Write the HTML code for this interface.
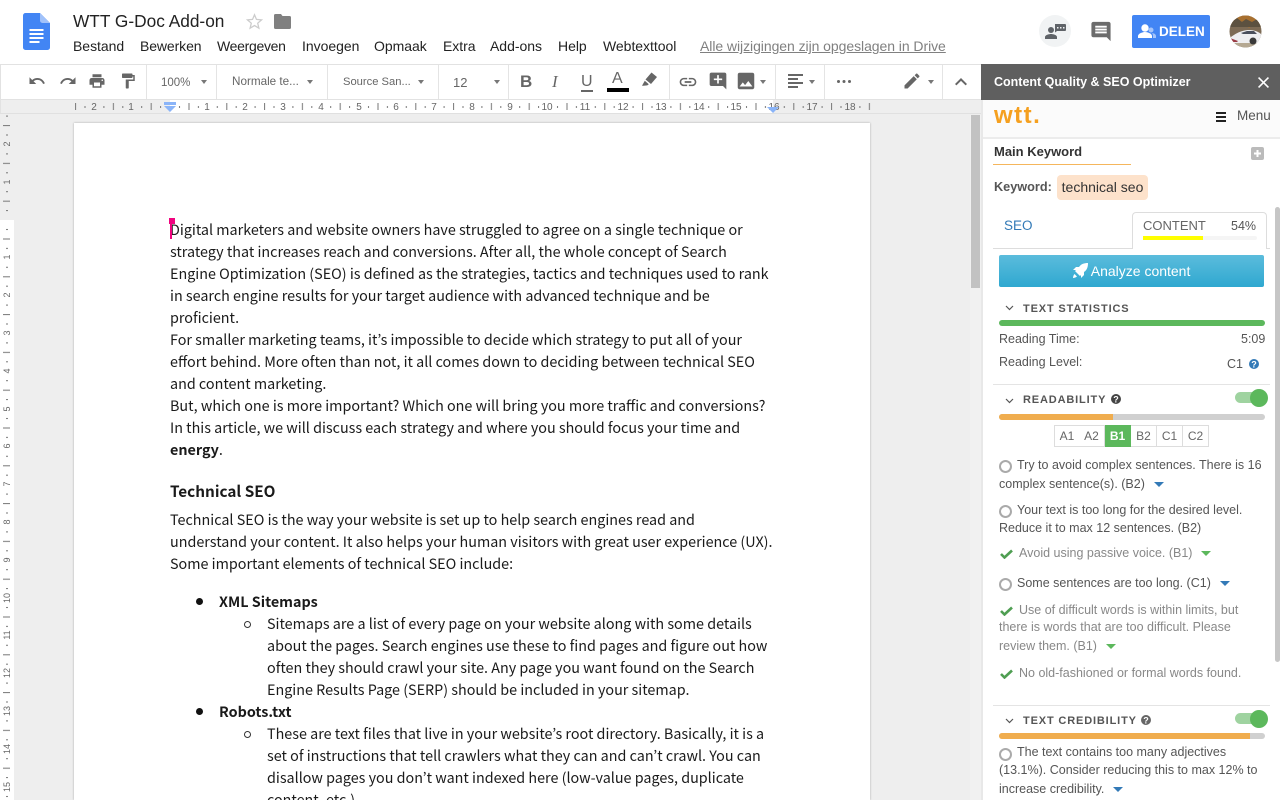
<!DOCTYPE html>
<html lang="nl"><head><meta charset="utf-8"><title>WTT G-Doc Add-on</title>
<style>
html,body{margin:0;padding:0;width:1280px;height:800px;overflow:hidden;background:#fff;font-family:"Liberation Sans",sans-serif}
#r{position:relative;width:1280px;height:800px;overflow:hidden}
.a{position:absolute;white-space:nowrap}
.m{top:37px;font-size:14px;line-height:18px;color:#222;letter-spacing:-.03px}
.d{left:170px;font-family:"Noto Sans CJK KR","Liberation Sans",sans-serif;font-size:14.35px;line-height:22px;color:#1a1a1a;white-space:nowrap;position:absolute}
.l{left:267px}
.t{color:#666;font-size:11.500px;line-height:16px}
.div{position:absolute;top:65px;width:1px;height:34px;background:#e4e4e4}
.car{position:absolute;width:0;height:0;border-left:3.5px solid transparent;border-right:3.5px solid transparent;border-top:4px solid #777}
.i{position:absolute;fill:#666}
.s{font-size:12.500px;line-height:18px;color:#555;position:absolute;white-space:nowrap}
.g{color:#888}
.h{font-size:11px;font-weight:bold;color:#555;letter-spacing:.85px;position:absolute;line-height:16px;white-space:nowrap}
.rad{position:absolute;width:9px;height:9px;border:2px solid #aaa;border-radius:50%;background:#fff}
.cb{position:absolute;width:0;height:0;border-left:5px solid transparent;border-right:5px solid transparent;border-top:5px solid #337ab7}
.cg{border-top-color:#5cb85c}
.lv{position:absolute;top:425px;height:20px;line-height:20px;width:25px;text-align:center;font-size:12px;color:#666;border:1px solid #ddd;border-left:0;background:#fff}
.hr{position:absolute;left:993px;width:277px;height:1px;background:#e4e4e4}
</style></head><body><div id="r">

<!-- Title bar -->
<svg class="a" style="left:23px;top:13px" width="27" height="37" viewBox="0 0 27 37"><path d="M2.5 0H17l10 10v24.500a2.500 2.500 0 0 1-2.500 2.500h-22A2.500 2.500 0 0 1 0 34.500v-32A2.500 2.500 0 0 1 2.500 0z" fill="#4285f4"/><path d="M17 0l10 10h-7.500A2.500 2.500 0 0 1 17 7.500z" fill="#a1c2fa"/><path d="M6.500 16h14v2h-14zM6.500 20h14v2h-14zM6.500 24h14v2h-14zM6.500 28h10v2h-10z" fill="#fff"/></svg>
<div class="a" style="left:73px;top:10px;font-size:17.300px;line-height:22px;color:#222">WTT G-Doc Add-on</div>
<svg class="a" style="left:246px;top:13px" width="17" height="17" viewBox="0 0 24 24"><path d="M12 2.500l2.800 6.600 7.200.6-5.500 4.700 1.700 7-6.200-3.700-6.200 3.700 1.700-7L2 9.700l7.200-.6z" fill="none" stroke="#ccc" stroke-width="1.800"/></svg>
<svg class="a" style="left:274px;top:14px" width="17" height="15" viewBox="0 0 17 15"><path d="M1.500 0H7l1.500 2h7A1.500 1.500 0 0 1 17 3.500v10A1.500 1.500 0 0 1 15.500 15h-14A1.500 1.500 0 0 1 0 13.500v-12A1.500 1.500 0 0 1 1.500 0z" fill="#808080"/></svg>

<div class="a m" style="left:73px">Bestand</div>
<div class="a m" style="left:140px;letter-spacing:-.1px">Bewerken</div>
<div class="a m" style="left:217px;letter-spacing:-.3px">Weergeven</div>
<div class="a m" style="left:302px">Invoegen</div>
<div class="a m" style="left:374px">Opmaak</div>
<div class="a m" style="left:443px">Extra</div>
<div class="a m" style="left:490px">Add-ons</div>
<div class="a m" style="left:558px">Help</div>
<div class="a m" style="left:603px">Webtexttool</div>
<div class="a m" style="left:700px;color:#808080;text-decoration:underline;letter-spacing:-.06px">Alle wijzigingen zijn opgeslagen in Drive</div>

<!-- Top right -->
<div class="a" style="left:1039px;top:15px;width:32px;height:32px;border-radius:50%;background:#f1f3f4"></div>
<svg class="a" style="left:1045px;top:24px" width="21" height="15" viewBox="0 0 21 15"><circle cx="6" cy="6" r="3" fill="#5f6368"/><path d="M0 15v-2c0-2 4-3 6-3s6 1 6 3v2z" fill="#5f6368"/><path d="M10 0h10a1 1 0 0 1 1 1v5a1 1 0 0 1-1 1h-8l-2 1.500z" fill="#5f6368"/><path d="M12 3h1.500v1.500H12zM15 3h1.500v1.500H15zM18 3h1.500v1.500H18z" fill="#f1f3f4"/></svg>
<svg class="a" style="left:1089px;top:20px;fill:#6b6b6b" width="24" height="23" viewBox="0 0 24 24"><path d="M21.990 4c0-1.100-.89-2-1.990-2H4c-1.100 0-2 .9-2 2v12c0 1.100.9 2 2 2h14l4 4-.01-18zM18 14H6v-2h12v2zm0-3H6V9h12v2zm0-3H6V6h12v2z"/></svg>
<div class="a" style="left:1132px;top:15px;width:78px;height:33px;background:#4285f4;border-radius:2px"></div>
<svg class="a" style="left:1138px;top:24px" width="18" height="15" viewBox="0 0 18 15"><circle cx="7" cy="4" r="3.700" fill="#fff"/><path d="M0 14v-2c0-2.500 4.500-4 7-4s7 1.500 7 4v2z" fill="#fff"/><circle cx="13" cy="6" r="2.500" fill="#a6c5fa"/><path d="M14 9c2 .3 4 1.200 4 3v2h-3v-2c0-1.200-.4-2.200-1-3z" fill="#a6c5fa"/></svg>
<div class="a" style="left:1159px;top:23px;color:#fff;font-weight:bold;font-size:13.500px;line-height:17px">DELEN</div>
<svg class="a" style="left:1229px;top:15px" width="33" height="33" viewBox="0 0 33 33"><defs><clipPath id="c"><circle cx="16.500" cy="16.500" r="16"/></clipPath></defs><g clip-path="url(#c)"><rect width="33" height="33" fill="#7d6b55"/><path d="M0 0h33v13L26 8l-6 5-6-7-7 6-7-2z" fill="#a8702f"/><path d="M8 3l5 4 4-3 6 3 5-3 5 5v3H0V8z" fill="#5c5140"/><rect y="27" width="33" height="6" fill="#b5a892"/><path d="M1 23c3-3 11-8 19-8 6 0 10 2 13 5v8H4z" fill="#eeeef0"/><path d="M12 18l6-2h7l3 3H14z" fill="#4a4f5c"/><path d="M1 23l8 3-1 1H1z" fill="#9a3a44"/><circle cx="24" cy="26" r="3.500" fill="#3a3a3a"/></g></svg>

<!-- Toolbar -->
<div class="a" style="left:0;top:64px;width:981px;height:1px;background:#e2e2e2"></div>
<div class="a" style="left:0;top:64px;width:1px;height:736px;background:#e2e2e2"></div>
<div class="div" style="left:146px"></div><div class="div" style="left:216px"></div><div class="div" style="left:327px"></div><div class="div" style="left:438px"></div><div class="div" style="left:508px"></div><div class="div" style="left:669px"></div><div class="div" style="left:775px"></div><div class="div" style="left:824px"></div><div class="div" style="left:942px"></div>

<svg class="i" style="left:28px;top:72px" width="18" height="18" viewBox="0 0 24 24"><path d="M12.500 8c-2.650 0-5.050.99-6.900 2.600L2 7v9h9l-3.620-3.620c1.390-1.160 3.160-1.880 5.120-1.880 3.540 0 6.550 2.310 7.600 5.500l2.370-.78C21.080 11.030 17.150 8 12.500 8z"/></svg>
<svg class="i" style="left:59px;top:72px" width="18" height="18" viewBox="0 0 24 24"><path d="M18.400 10.600C16.550 8.990 14.150 8 11.500 8c-4.650 0-8.580 3.030-9.960 7.220L3.900 16c1.050-3.190 4.050-5.500 7.600-5.500 1.950 0 3.730.72 5.120 1.880L13 16h9V7l-3.600 3.600z"/></svg>
<svg class="i" style="left:88px;top:72px" width="18" height="18" viewBox="0 0 24 24"><path d="M19 8H5c-1.660 0-3 1.340-3 3v6h4v4h12v-4h4v-6c0-1.660-1.340-3-3-3zm-3 11H8v-5h8v5zm3-7c-.55 0-1-.45-1-1s.45-1 1-1 1 .45 1 1-.45 1-1 1zm-1-9H6v4h12V3z"/></svg>
<svg class="i" style="left:119px;top:72px" width="18" height="18" viewBox="0 0 24 24"><path d="M18 4V3c0-.55-.45-1-1-1H5c-.55 0-1 .45-1 1v4c0 .55.45 1 1 1h12c.55 0 1-.45 1-1V6h1v4H9v11c0 .55.45 1 1 1h2c.55 0 1-.45 1-1v-9h8V4h-3z"/></svg>

<div class="a t" style="left:161px;top:75px;font-size:11.500px">100%</div><div class="car" style="left:201px;top:80px"></div>
<div class="a t" style="left:232px;top:74px;font-size:11.700px">Normale te...</div><div class="car" style="left:307px;top:80px"></div>
<div class="a t" style="left:343px;top:74px;font-size:11.200px">Source San...</div><div class="car" style="left:418px;top:80px"></div>
<div class="a t" style="left:453px;top:75px;font-size:13px">12</div><div class="car" style="left:494px;top:80px"></div>

<div class="a" style="left:520px;top:72px;font-size:17px;line-height:20px;font-weight:bold;color:#666">B</div>
<div class="a" style="left:552px;top:72px;font-size:17px;line-height:20px;font-style:italic;color:#666;font-family:'Liberation Serif',serif">I</div>
<div class="a" style="left:581px;top:72px;font-size:16px;line-height:20px;color:#666">U</div>
<div class="a" style="left:581px;top:90px;width:12px;height:1.500px;background:#666"></div>
<div class="a" style="left:612px;top:69px;font-size:16px;line-height:20px;color:#666">A</div>
<div class="a" style="left:607px;top:88px;width:22px;height:4px;background:#000"></div>
<svg class="i" style="left:642px;top:71px" width="17" height="17" viewBox="0 0 17 17"><path d="M9.500 1.500l5.500 4.500-6 7-5.500-4.500zM2.800 9.800l4 3.400-1.500 1.200-3.800.3H0z"/></svg>
<svg class="i" style="left:678px;top:72px" width="20" height="20" viewBox="0 0 24 24"><path d="M3.900 12c0-1.710 1.390-3.100 3.100-3.100h4V7H7c-2.760 0-5 2.240-5 5s2.240 5 5 5h4v-1.900H7c-1.710 0-3.100-1.390-3.100-3.100zM8 13h8v-2H8v2zm9-6h-4v1.900h4c1.710 0 3.100 1.390 3.100 3.100s-1.390 3.100-3.100 3.100h-4V17h4c2.760 0 5-2.240 5-5s-2.240-5-5-5z"/></svg>
<svg class="i" style="left:708px;top:71px" width="20" height="20" viewBox="0 0 24 24"><path d="M22 4c0-1.100-.9-2-2-2H4c-1.100 0-2 .9-2 2v12c0 1.100.9 2 2 2h14l4 4V4zm-5 7h-4v4h-2v-4H7V9h4V5h2v4h4v2z"/></svg>
<svg class="i" style="left:735px;top:70px" width="22" height="22" viewBox="0 0 24 24"><path d="M21 19V5c0-1.100-.9-2-2-2H5c-1.100 0-2 .9-2 2v14c0 1.100.9 2 2 2h14c1.100 0 2-.9 2-2zM8.500 13.500l2.500 3.010L14.500 12l4.500 6H5l3.500-4.500z"/></svg>
<div class="car" style="left:760px;top:80px"></div>
<svg class="a" style="left:788px;top:74px" width="15" height="15" viewBox="0 0 15 15"><path d="M0 0h15v2H0zM0 4h10v2H0zM0 8h15v2H0zM0 12h10v2H0z" fill="#666"/></svg>
<div class="car" style="left:809px;top:80px"></div>
<svg class="a" style="left:837px;top:80px" width="14" height="3"><circle cx="1.500" cy="1.500" r="1.500" fill="#666"/><circle cx="7" cy="1.500" r="1.500" fill="#666"/><circle cx="12.500" cy="1.500" r="1.500" fill="#666"/></svg>
<svg class="i" style="left:902px;top:71px" width="20" height="20" viewBox="0 0 24 24"><path d="M3 17.250V21h3.750L17.810 9.940l-3.750-3.750L3 17.250zM20.710 7.040c.39-.39.39-1.020 0-1.410l-2.340-2.340c-.39-.39-1.020-.39-1.410 0l-1.830 1.830 3.750 3.750 1.830-1.830z"/></svg>
<div class="car" style="left:928px;top:80px"></div>
<svg class="i" style="left:949px;top:70px" width="24" height="24" viewBox="0 0 24 24"><path d="M12 8l-6 6 1.410 1.410L12 10.830l4.590 4.58L18 14z"/></svg>

<!-- Canvas -->
<div class="a" style="left:1px;top:99px;width:980px;height:701px;background:#eee"></div>

<!-- H ruler -->
<div class="a" style="left:1px;top:99px;width:980px;height:1px;background:#e2e2e2"></div>
<div class="a" style="left:170px;top:100px;width:603px;height:14px;background:#fff"></div>
<div class="a" style="left:0;top:113px;width:981px;height:1px;background:#e0e0e0"></div>
<svg class="a" style="left:0;top:100px;font-family:'Liberation Sans',sans-serif" width="981" height="14">
<defs><pattern id="p" patternUnits="userSpaceOnUse" x="170" y="0" width="37.800" height="14"><rect x="18.500" y="3" width="1" height="7" fill="#777"/><rect x="9" y="6" width="1" height="2" fill="#777"/><rect x="27.900" y="6" width="1" height="2" fill="#777"/></pattern></defs>
<rect x="70" width="801" height="14" fill="url(#p)"/>
<g font-size="10" fill="#666" text-anchor="middle">
<text x="94" y="10">2</text><text x="131" y="10">1</text><text x="207" y="10">1</text><text x="245" y="10">2</text><text x="283" y="10">3</text><text x="321" y="10">4</text><text x="359" y="10">5</text><text x="396" y="10">6</text><text x="434" y="10">7</text><text x="472" y="10">8</text><text x="510" y="10">9</text><text x="547" y="10">10</text><text x="585" y="10">11</text><text x="623" y="10">12</text><text x="661" y="10">13</text><text x="699" y="10">14</text><text x="736" y="10">15</text><text x="774" y="10">16</text><text x="812" y="10">17</text><text x="850" y="10">18</text>
</g>
<path d="M164 2h12v3h-12zM164 6h12l-6 6z" fill="#8ab4f8"/><path d="M767 7h12l-6 6z" fill="#8ab4f8"/>
</svg>

<!-- V ruler -->
<div class="a" style="left:0;top:114px;width:14px;height:686px;background:#fff"></div>
<div class="a" style="left:0;top:114px;width:14px;height:106px;background:#eee"></div>
<svg class="a" style="left:0;top:114px;font-family:'Liberation Sans',sans-serif" width="14" height="686">
<defs><pattern id="q" patternUnits="userSpaceOnUse" x="0" y="106" width="14" height="37.800"><rect x="3" y="18.500" width="7" height="1" fill="#777"/><rect x="6" y="9" width="2" height="1" fill="#777"/><rect x="6" y="27.900" width="2" height="1" fill="#777"/></pattern></defs>
<rect width="14" height="686" fill="url(#q)"/>
<g font-size="9" fill="#666" text-anchor="middle">
<text transform="translate(10 30) rotate(-90)">2</text><text transform="translate(10 68) rotate(-90)">1</text>
<text transform="translate(10 143) rotate(-90)">1</text><text transform="translate(10 181) rotate(-90)">2</text><text transform="translate(10 219) rotate(-90)">3</text><text transform="translate(10 257) rotate(-90)">4</text><text transform="translate(10 295) rotate(-90)">5</text><text transform="translate(10 332) rotate(-90)">6</text><text transform="translate(10 370) rotate(-90)">7</text><text transform="translate(10 408) rotate(-90)">8</text><text transform="translate(10 446) rotate(-90)">9</text><text transform="translate(10 484) rotate(-90)">10</text><text transform="translate(10 521) rotate(-90)">11</text><text transform="translate(10 559) rotate(-90)">12</text><text transform="translate(10 597) rotate(-90)">13</text><text transform="translate(10 635) rotate(-90)">14</text><text transform="translate(10 673) rotate(-90)">15</text>
</g></svg>

<!-- Page -->
<div class="a" style="left:74px;top:123px;width:796px;height:677px;background:#fff;box-shadow:0 0 2px rgba(0,0,0,.3)"></div>
<div class="a" style="left:970px;top:115px;width:11px;height:685px;background:#f1f1f1"></div>
<div class="a" style="left:971px;top:115px;width:9px;height:173px;background:#c2c2c2"></div>

<!-- Document text -->
<div class="d" style="top:219px">Digital marketers and website owners have struggled to agree on a single technique or</div>
<div class="d" style="top:241px">strategy that increases reach and conversions. After all, the whole concept of Search</div>
<div class="d" style="top:263px">Engine Optimization (SEO) is defined as the strategies, tactics and techniques used to rank</div>
<div class="d" style="top:285px">in search engine results for your target audience with advanced technique and be</div>
<div class="d" style="top:307px">proficient.</div>
<div class="d" style="top:329px">For smaller marketing teams, it’s impossible to decide which strategy to put all of your</div>
<div class="d" style="top:351px">effort behind. More often than not, it all comes down to deciding between technical SEO</div>
<div class="d" style="top:373px">and content marketing.</div>
<div class="d" style="top:395px">But, which one is more important? Which one will bring you more traffic and conversions?</div>
<div class="d" style="top:417px">In this article, we will discuss each strategy and where you should focus your time and</div>
<div class="d" style="top:439px"><b>energy</b>.</div>
<div class="d" style="top:480px;font-weight:bold;font-size:15.300px">Technical SEO</div>
<div class="d" style="top:509px">Technical SEO is the way your website is set up to help search engines read and</div>
<div class="d" style="top:531px">understand your content. It also helps your human visitors with great user experience (UX).</div>
<div class="d" style="top:553px">Some important elements of technical SEO include:</div>
<div class="a" style="left:196px;top:598px;width:7px;height:7px;border-radius:50%;background:#111"></div>
<div class="d" style="top:591px;left:219px;font-weight:bold">XML Sitemaps</div>
<div class="a" style="left:244px;top:621px;width:5px;height:5px;border-radius:50%;border:1px solid #333"></div>
<div class="d l" style="top:613px">Sitemaps are a list of every page on your website along with some details</div>
<div class="d l" style="top:635px">about the pages. Search engines use these to find pages and figure out how</div>
<div class="d l" style="top:657px">often they should crawl your site. Any page you want found on the Search</div>
<div class="d l" style="top:679px">Engine Results Page (SERP) should be included in your sitemap.</div>
<div class="a" style="left:196px;top:708px;width:7px;height:7px;border-radius:50%;background:#111"></div>
<div class="d" style="top:701px;left:219px;font-weight:bold">Robots.txt</div>
<div class="a" style="left:244px;top:731px;width:5px;height:5px;border-radius:50%;border:1px solid #333"></div>
<div class="d l" style="top:723px">These are text files that live in your website’s root directory. Basically, it is a</div>
<div class="d l" style="top:745px">set of instructions that tell crawlers what they can and can’t crawl. You can</div>
<div class="d l" style="top:767px">disallow pages you don’t want indexed here (low-value pages, duplicate</div>
<div class="d l" style="top:789px">content, etc.)</div>
<div class="a" style="left:169px;top:218px;width:6px;height:6px;background:#f0047f"></div>
<div class="a" style="left:170px;top:218px;width:2px;height:21px;background:#f0047f"></div>

<!-- Sidebar -->
<div class="a" style="left:981px;top:64px;width:299px;height:736px;background:#fff"></div>
<div class="a" style="left:981px;top:100px;width:2px;height:700px;background:#e8e8e8"></div>
<div class="a" style="left:981px;top:64px;width:299px;height:36px;background:#5f5f5f"></div>
<div class="a" style="left:994px;top:74px;color:#fff;font-weight:bold;font-size:12.500px;line-height:16px">Content Quality &amp; SEO Optimizer</div>
<svg class="a" style="left:1258px;top:77px" width="11" height="11" viewBox="5 5 14 14"><path d="M19 6.410L17.590 5 12 10.590 6.410 5 5 6.410 10.590 12 5 17.590 6.410 19 12 13.410 17.590 19 19 17.590 13.410 12z" fill="#fff"/></svg>
<div class="a" style="left:983px;top:100px;width:297px;height:37px;background:#fbfbfb"></div>
<div class="a" style="left:983px;top:137px;width:297px;height:2px;background:#ececec"></div>
<div class="a" style="left:994px;top:101px;font-size:24px;font-weight:bold;color:#f5a01f;line-height:30px;letter-spacing:1.500px">wtt.</div>
<svg class="a" style="left:1216px;top:112px" width="10" height="10"><path d="M0 0h10v2H0zM0 4h10v2H0zM0 8h10v2H0z" fill="#222"/></svg>
<div class="a" style="left:1237px;top:108px;font-size:13.500px;line-height:16px;color:#555">Menu</div>

<div class="a" style="left:994px;top:144px;font-size:13px;line-height:16px;font-weight:bold;color:#333">Main Keyword</div>
<div class="a" style="left:993px;top:164px;width:138px;height:1px;background:#f5b65c"></div>
<svg class="a" style="left:1251px;top:147px" width="13" height="13"><rect width="13" height="13" rx="2" fill="#bbb"/><path d="M5.500 3h2v2.500H10v2H7.500V10h-2V7.500H3v-2h2.500z" fill="#fff"/></svg>
<div class="a" style="left:994px;top:179px;font-size:12.700px;line-height:16px;font-weight:bold;color:#555">Keyword:</div>
<div class="a" style="left:1057px;top:175px;width:91px;height:25px;line-height:24px;background:#fde2cb;border-radius:4px;text-align:center;font-size:14px;color:#333">technical seo</div>

<div class="a" style="left:993px;top:248px;width:277px;height:1px;background:#ddd"></div>
<div class="a" style="left:1004px;top:218px;font-size:13.500px;line-height:16px;color:#337ab7">SEO</div>
<div class="a" style="left:1132px;top:212px;width:135px;height:37px;background:#fff;border:1px solid #ddd;border-bottom:0;border-radius:4px 4px 0 0;box-sizing:border-box"></div>
<div class="a" style="left:1143px;top:218px;font-size:13px;line-height:16px;color:#666">CONTENT</div>
<div class="a" style="left:1231px;top:218px;font-size:12.500px;line-height:16px;color:#555">54%</div>
<div class="a" style="left:1143px;top:236px;width:114px;height:4px;background:#f5f5f5;border-radius:2px"></div>
<div class="a" style="left:1143px;top:236px;width:60px;height:4px;background:#ffff00"></div>

<div class="a" style="left:999px;top:255px;width:265px;height:32px;line-height:32px;text-align:center;color:#fff;font-size:14px;background:linear-gradient(#5bbcdc,#2fa8d0);border-radius:2px"><svg width="15" height="15" viewBox="0 0 15 15" style="vertical-align:-2px"><path d="M15 0c-4 0-7 1-9 4H3L0 7h3l-1 1 5 5 1-1v3l3-3V9c3-2 4-5 4-9zM1.500 11C.5 12 0 14 0 15c1 0 3-.5 4-1.500z" fill="#fff"/></svg> Analyze content</div>

<svg class="a" style="left:1005px;top:305px" width="9" height="6"><path d="M1 1l3.500 3.500L8 1" fill="none" stroke="#555" stroke-width="1.200"/></svg>
<div class="h" style="left:1023px;top:301px">TEXT STATISTICS</div>
<div class="a" style="left:999px;top:320px;width:266px;height:6px;background:#5cb85c;border-radius:3px"></div>
<div class="s" style="left:999px;top:330px">Reading Time:</div>
<div class="s" style="left:1241px;top:330px">5:09</div>
<div class="s" style="left:999px;top:353px">Reading Level:</div>
<div class="s" style="left:1227px;top:355px">C1</div>
<svg class="a" style="left:1249px;top:359px" width="10" height="10"><circle cx="5" cy="5" r="5" fill="#337ab7"/><text x="5" y="8.500" font-size="9" font-weight="bold" fill="#fff" text-anchor="middle" font-family="Liberation Sans">?</text></svg>
<div class="hr" style="top:384px"></div>

<svg class="a" style="left:1005px;top:398px" width="9" height="6"><path d="M1 1l3.500 3.500L8 1" fill="none" stroke="#555" stroke-width="1.200"/></svg>
<div class="h" style="left:1023px;top:392px">READABILITY</div>
<svg class="a" style="left:1111px;top:394px" width="10" height="10"><circle cx="5" cy="5" r="5" fill="#444"/><text x="5" y="8.500" font-size="9" font-weight="bold" fill="#fff" text-anchor="middle" font-family="Liberation Sans">?</text></svg>
<div class="a" style="left:1235px;top:392px;width:28px;height:11px;border-radius:6px;background:#9fd3a0"></div>
<div class="a" style="left:1250px;top:389px;width:18px;height:18px;border-radius:50%;background:#5cb85c"></div>
<div class="a" style="left:999px;top:414px;width:266px;height:6px;background:#d0d0d0;border-radius:3px"></div>
<div class="a" style="left:999px;top:414px;width:114px;height:6px;background:#f0ad4e;border-radius:3px 0 0 3px"></div>

<div class="lv" style="left:1054px;border-left:1px solid #ddd;width:24px">A1</div>
<div class="lv" style="left:1079px">A2</div>
<div class="lv" style="left:1105px;background:#5cb85c;color:#fff;font-weight:bold;border-color:#5cb85c">B1</div>
<div class="lv" style="left:1131px">B2</div>
<div class="lv" style="left:1157px">C1</div>
<div class="lv" style="left:1183px">C2</div>

<div class="rad" style="left:999px;top:460px"></div>
<div class="s" style="left:1017px;top:456px">Try to avoid complex sentences. There is 16</div>
<div class="s" style="left:999px;top:475px">complex sentence(s). (B2)</div>
<div class="cb" style="left:1154px;top:482px"></div>
<div class="rad" style="left:999px;top:505px"></div>
<div class="s" style="left:1017px;top:501px">Your text is too long for the desired level.</div>
<div class="s" style="left:999px;top:519px">Reduce it to max 12 sentences. (B2)</div>

<svg class="a" style="left:1000px;top:549px" width="13" height="10"><path d="M1 5l3.500 3.500L12 1.500" fill="none" stroke="#4f9e52" stroke-width="2.600"/></svg>
<div class="s g" style="left:1019px;top:544px">Avoid using passive voice. (B1)</div>
<div class="cb cg" style="left:1201px;top:551px"></div>
<div class="rad" style="left:999px;top:578px"></div>
<div class="s" style="left:1017px;top:574px">Some sentences are too long. (C1)</div>
<div class="cb" style="left:1220px;top:581px"></div>

<svg class="a" style="left:1000px;top:606px" width="13" height="10"><path d="M1 5l3.500 3.500L12 1.500" fill="none" stroke="#4f9e52" stroke-width="2.600"/></svg>
<div class="s g" style="left:1019px;top:601px">Use of difficult words is within limits, but</div>
<div class="s g" style="left:999px;top:618px">there is words that are too difficult. Please</div>
<div class="s g" style="left:999px;top:637px">review them. (B1)</div>
<div class="cb cg" style="left:1106px;top:644px"></div>
<svg class="a" style="left:1000px;top:669px" width="13" height="10"><path d="M1 5l3.500 3.500L12 1.500" fill="none" stroke="#4f9e52" stroke-width="2.600"/></svg>
<div class="s g" style="left:1019px;top:664px">No old-fashioned or formal words found.</div>
<div class="hr" style="top:705px"></div>

<svg class="a" style="left:1005px;top:718px" width="9" height="6"><path d="M1 1l3.500 3.500L8 1" fill="none" stroke="#555" stroke-width="1.200"/></svg>
<div class="h" style="left:1023px;top:713px">TEXT CREDIBILITY</div>
<svg class="a" style="left:1141px;top:715px" width="10" height="10"><circle cx="5" cy="5" r="5" fill="#666"/><text x="5" y="8.500" font-size="9" font-weight="bold" fill="#fff" text-anchor="middle" font-family="Liberation Sans">?</text></svg>
<div class="a" style="left:1235px;top:713px;width:28px;height:11px;border-radius:6px;background:#9fd3a0"></div>
<div class="a" style="left:1250px;top:710px;width:18px;height:18px;border-radius:50%;background:#5cb85c"></div>
<div class="a" style="left:999px;top:733px;width:266px;height:6px;background:#d0d0d0;border-radius:3px"></div>
<div class="a" style="left:999px;top:733px;width:251px;height:6px;background:#f0ad4e;border-radius:3px 0 0 3px"></div>
<div class="rad" style="left:999px;top:748px"></div>
<div class="s" style="left:1017px;top:743px">The text contains too many adjectives</div>
<div class="s" style="left:999px;top:761px">(13.1%). Consider reducing this to max 12% to</div>
<div class="s" style="left:999px;top:780px">increase credibility.</div>
<div class="cb" style="left:1113px;top:787px"></div>

<div class="a" style="left:1275px;top:207px;width:5px;height:455px;background:#c6c6c6;border-radius:3px"></div>
</div></body></html>
